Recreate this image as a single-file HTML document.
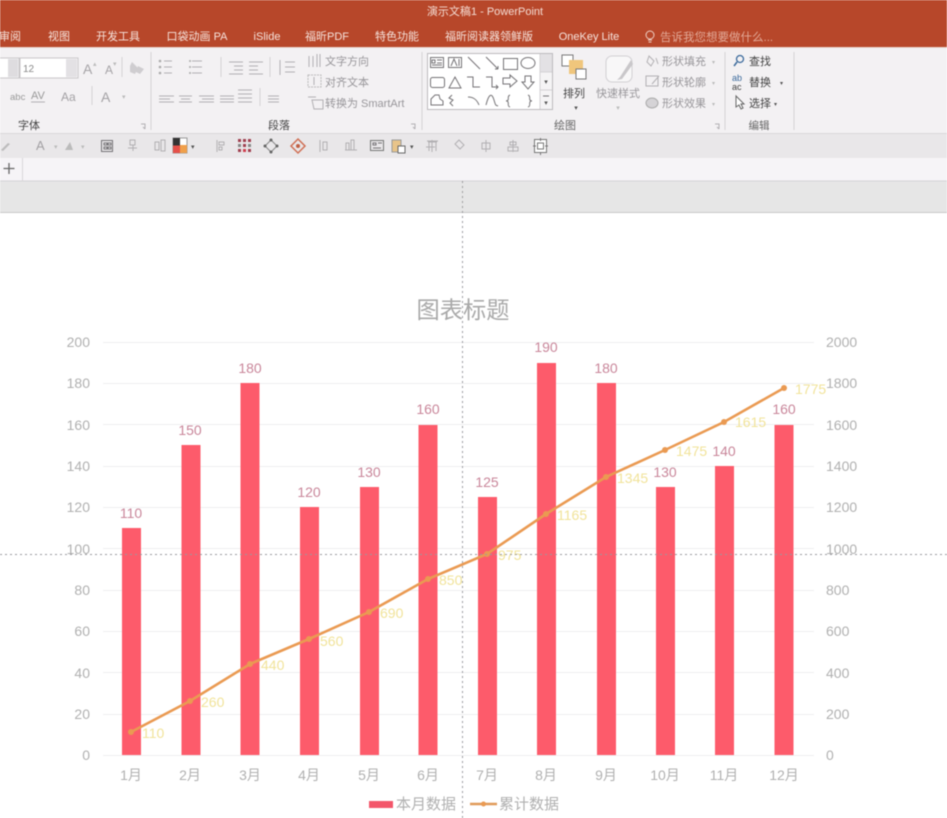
<!DOCTYPE html>
<html lang="zh">
<head>
<meta charset="utf-8">
<title>演示文稿1 - PowerPoint</title>
<style>
html,body{margin:0;padding:0;background:#fff;width:947px;height:818px;overflow:hidden}
svg{display:block;font-family:"Liberation Sans","Noto Sans CJK SC",sans-serif;filter:blur(.45px)}
.tab{fill:#f6e3dc;font-size:11px;text-anchor:middle}
.rb{fill:#98969a;font-size:11px}
.rd{fill:#444;font-size:11px}
.gl{fill:#666;font-size:10.5px;text-anchor:middle}
.ic{fill:none;stroke:#b2b0b3;stroke-width:1}
.dk{fill:none;stroke:#757376;stroke-width:1}
.ax{fill:#b0b0b0;font-size:14px}
.bl{fill:#c9869a;font-size:14px;text-anchor:middle}
.ll{fill:#f1e39a;font-size:14px}
.mo{fill:#b0b0b0;font-size:14px;text-anchor:middle}
.g{stroke:#eeeef0;stroke-width:1}
.b{fill:#fd5b6b}
.s{stroke:#d4d2d5;stroke-width:1}
</style>
</head>
<body>
<svg width="947" height="818" viewBox="0 0 947 818" xmlns="http://www.w3.org/2000/svg">
<!-- title bar -->
<rect width="947" height="47" fill="#b7472a"/>
<text x="485" y="15" fill="#f4dcd3" font-size="11" text-anchor="middle">演示文稿1 - PowerPoint</text>
<text class="tab" x="10" y="40">审阅</text>
<text class="tab" x="59" y="40">视图</text>
<text class="tab" x="118" y="40">开发工具</text>
<text class="tab" x="197" y="40">口袋动画 PA</text>
<text class="tab" x="267" y="40">iSlide</text>
<text class="tab" x="327" y="40">福昕PDF</text>
<text class="tab" x="397" y="40">特色功能</text>
<text class="tab" x="489" y="40">福昕阅读器领鲜版</text>
<text class="tab" x="589" y="40">OneKey Lite</text>
<circle cx="650" cy="35" r="4" fill="none" stroke="#eecfc4"/><path d="M648 40h4M648.500 42h3" stroke="#eecfc4"/>
<text x="660" y="41" fill="#e2a896" font-size="11.500">告诉我您想要做什么...</text>

<!-- ribbon -->
<rect y="47" width="947" height="86" fill="#f3f1f3"/>
<rect y="47" width="947" height="1" fill="#e9d6d0"/>
<path class="s" d="M151 52v78M422 52v78M725 52v78M794 52v78"/>

<!-- font group -->
<rect x="-2" y="58" width="21" height="20" fill="#fff" stroke="#c8c6c9"/>
<rect x="8" y="59" width="10" height="18" fill="#dedcdf"/>
<rect x="20" y="58" width="58" height="20" fill="#fff" stroke="#c8c6c9"/>
<rect x="66" y="59" width="11" height="18" fill="#e3e1e4"/>
<text x="23" y="72" font-size="10" fill="#888">12</text>
<text x="83" y="74" font-size="14" fill="#a5a3a6">A</text><text x="93" y="66" font-size="7" fill="#bbb">▴</text>
<text x="105" y="74" font-size="12" fill="#a5a3a6">A</text><text x="113" y="66" font-size="7" fill="#bbb">▾</text>
<path class="s" d="M122 57v20M92 86v19"/>
<path d="M132 62l6 6-3 6-5-2 0-6zM138 66l6 3-4 5-4-2z" fill="#cfcdd0"/>
<text x="10" y="100" font-size="9.500" fill="#999">abc</text>
<text x="31" y="99" font-size="11" fill="#999">AV</text><path class="ic" d="M31 102h14"/>
<text x="61" y="101" font-size="12" fill="#a3a1a4">Aa</text>
<text x="101" y="102" font-size="14" fill="#a3a1a4">A</text>
<text x="122" y="99" font-size="7" fill="#bbb">▾</text>
<text x="29" y="129" class="rd" text-anchor="middle">字体</text>
<path class="ic" d="M141 124h4v5M143 127l2 2"/>

<!-- paragraph group -->
<path class="ic" d="M164 61h8M164 67h8M164 73h8M192 61h10M192 67h10M192 73h10M159 96h15M159 99h11M159 102h15M179 96h13M181 99h9M179 102h13M199 96h15M202 99h12M199 102h15M220 96h14M220 99h14M220 102h14M238 90h14M238 94h14M238 98h14M238 102h14M268 96h11M268 99h11M268 102h11M229 62h14M234 66h9M234 70h9M229 74h14M249 62h14M249 66h9M249 70h9M249 74h14M285 62h10M285 67h10M285 72h10M280 60v15"/>
<path class="s" d="M221 57v20M270 57v20M260 88v18"/>
<circle cx="160" cy="61" r="1.300" fill="#aaa"/><circle cx="160" cy="67" r="1.300" fill="#aaa"/><circle cx="160" cy="73" r="1.300" fill="#aaa"/>
<circle cx="190" cy="61" r="1" fill="#aaa"/><circle cx="190" cy="67" r="1" fill="#aaa"/><circle cx="190" cy="73" r="1" fill="#aaa"/>
<path class="ic" d="M309 56v11M313 56v11M317 54v13M320 54v13"/>
<text x="325" y="65" class="rb">文字方向</text>
<rect x="308" y="75" width="13" height="12" fill="none" stroke="#bbb" stroke-dasharray="2 1"/>
<path class="ic" d="M314 77v8"/>
<text x="325" y="86" class="rb">对齐文本</text>
<path class="ic" d="M308 97h8M312 100h11v9h-9z"/>
<text x="325" y="107" class="rb">转换为 SmartArt</text>
<text x="279" y="129" class="rd" text-anchor="middle">段落</text>
<path class="ic" d="M411 124h4v5M413 127l2 2"/>

<!-- shapes gallery -->
<rect x="427.500" y="53.500" width="125" height="56" fill="#fff" stroke="#bdbbbe"/>
<rect x="540" y="54" width="12" height="55" fill="#f5f4f5"/>
<rect x="540" y="54" width="12" height="18" fill="#e3e1e4"/>
<path class="s" d="M540 54v55M540 72h12M540 90h12"/>
<text x="546" y="84" font-size="7" fill="#555" text-anchor="middle">▾</text>
<path class="dk" d="M543 96h6"/><text x="546" y="105" font-size="7" fill="#555" text-anchor="middle">▾</text>
<g class="dk">
<rect x="430.500" y="57.500" width="13" height="10"/><path d="M432 60h3v3h-3zM437 60h5M437 63h5M432 65h10"/>
<rect x="448.500" y="57.500" width="13" height="10"/><path d="M451 66l3-7 3 7M459 59v7"/>
<path d="M468 57l12 12M486 57l12 12M498 69v-3M498 69h-3"/>
<rect x="503.500" y="58.500" width="14" height="11"/>
<ellipse cx="528" cy="63" rx="7" ry="5.500"/>
<rect x="430.500" y="77.500" width="14" height="10" rx="2"/>
<path d="M449 88l6-11 6 11zM467 77h6v10h7M486 77h6v10h6M496 85l2 2-2 2M503 78h7v-3l7 6-7 6v-3h-7zM525 76h6v6h3l-6 7-6-7h3z"/>
<path d="M431 105v-6l4-4h4l1 4 3 2v4zM452 95l-3 3 4 2-3 3 3 3M468 97c6 0 9 3 11 8M486 105c3-12 6-12 8-5s2 5 4 6M510 95c-3 1-1 4-2 5 0 0-1 1-2 1 1 0 2 0 2 1 1 2-1 4 2 5M528 95c3 1 1 4 2 5 0 0 1 1 2 1-1 0-2 0-2 1-1 2 1 4-2 5"/>
</g>

<!-- arrange -->
<rect x="562" y="55" width="11" height="11" fill="#fff" stroke="#777"/>
<rect x="569" y="60" width="14" height="14" fill="#f0c67c"/>
<rect x="576" y="69" width="10" height="10" fill="#fff" stroke="#777"/>
<text x="574" y="97" class="rd" text-anchor="middle">排列</text>
<text x="576" y="110" font-size="7" fill="#555" text-anchor="middle">▾</text>
<!-- quick styles -->
<rect x="606" y="56" width="26" height="26" rx="6" fill="#f8f7f8" stroke="#d2d0d3"/>
<path d="M631 60l-11 17-3 3 5-1 11-15z" fill="#c9c7ca"/>
<text x="618" y="97" class="rb" text-anchor="middle">快速样式</text>
<text x="618" y="110" font-size="7" fill="#bbb" text-anchor="middle">▾</text>
<!-- shape fmt -->
<path class="ic" d="M649 56l5 5-3 5-4-4zM656 58l2 6"/>
<text x="662" y="65" class="rb">形状填充</text><text x="712" y="64" font-size="6" fill="#bbb">▾</text>
<path class="ic" d="M646 76h12v10h-12zM652 84l7-8"/>
<text x="662" y="86" class="rb">形状轮廓</text><text x="712" y="85" font-size="6" fill="#bbb">▾</text>
<ellipse cx="652" cy="103" rx="6" ry="5" fill="#d5d3d6" stroke="#aaa"/>
<text x="662" y="107" class="rb">形状效果</text><text x="712" y="106" font-size="6" fill="#bbb">▾</text>
<text x="565" y="129" class="rb" style="fill:#666" text-anchor="middle">绘图</text>
<path class="ic" d="M715 124h4v5M717 127l2 2"/>
<!-- editing -->
<circle cx="740" cy="59" r="3.500" fill="none" stroke="#3b6a9c" stroke-width="1.300"/><path d="M737 62l-3 4" stroke="#3b6a9c" stroke-width="1.500"/>
<text x="749" y="65" class="rd">查找</text>
<text x="732" y="81" font-size="9" fill="#3b6a9c">ab</text><text x="732" y="90" font-size="9" fill="#444">ac</text>
<text x="749" y="86" class="rd">替换</text><text x="780" y="85" font-size="6" fill="#555">▾</text>
<path d="M736 96v11l3-2 2 4 2-1-2-4h3z" fill="#fff" stroke="#666"/>
<text x="749" y="107" class="rd">选择</text><text x="774" y="106" font-size="6" fill="#555">▾</text>
<text x="759" y="129" class="gl">编辑</text>

<!-- quick toolbar -->
<rect y="133" width="947" height="25" fill="#e9e7e9"/>
<rect y="133" width="947" height="1" fill="#d9d7da"/>
<path d="M1 150l7-7 2 1-7 7z" fill="#bbb"/>
<text x="36" y="150" font-size="13" fill="#a3a1a4">A</text>
<text x="54" y="149" font-size="7" fill="#bbb">▾</text>
<path d="M65 150l5-8 3 8z" fill="#bbb"/><text x="81" y="149" font-size="7" fill="#bbb">▾</text>
<g class="dk">
<rect x="101.500" y="140.500" width="11" height="11"/><path d="M104 143h3v2h-3zM108 143h3v2h-3zM104 147h3v2h-3zM108 147h3v2h-3z"/>
</g>
<path class="ic" d="M130 140h5v5h-5zM128 148h9M133 145v6M155 142h4v8h-4zM161 140h4v11h-4zM217 140v12M219 142h5v3h-5zM219 147h3v3h-3zM320 140v12M323 142h4v8h-4zM345 150h12M346 143h3v7h-3zM351 140h3v10h-3zM432 140v12M428 142h9M426 147h9M486 140v12M482 143h8v6h-8zM513 140v12M510 142h6v3h-6zM508 147h10v4h-10zM459 140l5 5-4 4-5-5z"/>
<rect x="173" y="138" width="14" height="15" fill="#fff" stroke="#999"/>
<rect x="173" y="138" width="7" height="7.500" fill="#333"/>
<rect x="180" y="145" width="7" height="8" fill="#f0a04b"/>
<rect x="173" y="145.500" width="7" height="7.500" fill="#e5504a"/>
<text x="191" y="149" font-size="7" fill="#555">▾</text>
<g fill="#a04050"><rect x="238" y="139" width="3" height="3"/><rect x="243" y="139" width="3" height="3"/><rect x="248" y="139" width="3" height="3"/><rect x="238" y="144" width="3" height="3" fill="#888"/><rect x="243" y="144" width="3" height="3"/><rect x="248" y="144" width="3" height="3" fill="#888"/><rect x="238" y="149" width="3" height="3"/><rect x="243" y="149" width="3" height="3" fill="#d04050"/><rect x="248" y="149" width="3" height="3"/></g>
<path d="M271 140l6 6-6 6-6-6z" fill="none" stroke="#888"/><circle cx="271" cy="140" r="1.500" fill="#666"/><circle cx="271" cy="152" r="1.500" fill="#666"/><circle cx="265" cy="146" r="1.500" fill="#666"/><circle cx="277" cy="146" r="1.500" fill="#666"/>
<path d="M298 139l7 7-7 7-7-7z" fill="none" stroke="#d07055" stroke-width="1.500"/><circle cx="298" cy="146" r="2" fill="#c06045"/>
<rect x="370.500" y="140.500" width="13" height="10" fill="none" stroke="#777"/><path class="dk" d="M373 143h3v2h-3zM378 143h4M373 148h8"/>
<rect x="392" y="140" width="9" height="12" fill="#e8c48a" stroke="#999"/><rect x="398" y="146" width="7" height="7" fill="#fff" stroke="#666"/>
<text x="410" y="149" font-size="7" fill="#555">▾</text>
<path d="M427 141h11M429 141v10M436 141v10" class="ic"/>
<rect x="534.500" y="139.500" width="12" height="13" fill="#fff" stroke="#777"/><rect x="537.500" y="143" width="6" height="6" fill="none" stroke="#777"/>
<path class="dk" d="M540.500 138v3M540.500 152v3M533 146h3M545 146h3" />

<!-- tabs row -->
<rect y="158" width="947" height="23" fill="#f6f4f7"/>
<path d="M22.500 158v23" stroke="#d9d7da"/>
<path d="M9 163v11M3.500 168.500h11" stroke="#666" stroke-width="1.300"/>
<rect y="181" width="947" height="31" fill="#e6e6e6"/>
<path d="M0 181h947" stroke="#d5d3d6"/>
<rect y="212" width="947" height="1" fill="#c9c9c9"/>

<!-- chart grid -->
<g class="g">
<path d="M103 342.500h711M103 383.500h711M103 424.500h711M103 466.500h711M103 507.500h711M103 548.500h711M103 590.500h711M103 631.500h711M103 672.500h711M103 714.500h711M103 755.500h711"/>
</g>
<text x="463" y="318" text-anchor="middle" font-size="23.250" fill="#a9a9a9">图表标题</text>

<!-- bars -->
<rect class="b" x="122" y="528" width="19" height="227"/>
<rect class="b" x="181.500" y="445" width="19" height="310"/>
<rect class="b" x="240.500" y="383" width="19" height="372"/>
<rect class="b" x="300" y="507" width="19" height="248"/>
<rect class="b" x="360" y="487" width="19" height="268"/>
<rect class="b" x="418.500" y="425" width="19" height="330"/>
<rect class="b" x="478" y="497" width="19" height="258"/>
<rect class="b" x="537" y="363" width="19" height="392"/>
<rect class="b" x="597" y="383" width="19" height="372"/>
<rect class="b" x="656" y="487" width="19" height="268"/>
<rect class="b" x="715" y="466" width="19" height="289"/>
<rect class="b" x="774.500" y="425" width="19" height="330"/>

<!-- bar labels -->
<text class="bl" x="131" y="518">110</text>
<text class="bl" x="190" y="435">150</text>
<text class="bl" x="250" y="373">180</text>
<text class="bl" x="309" y="497">120</text>
<text class="bl" x="369" y="477">130</text>
<text class="bl" x="428" y="414">160</text>
<text class="bl" x="487" y="487">125</text>
<text class="bl" x="546" y="352">190</text>
<text class="bl" x="606" y="373">180</text>
<text class="bl" x="665" y="477">130</text>
<text class="bl" x="724" y="456">140</text>
<text class="bl" x="784" y="414">160</text>

<!-- line -->
<polyline points="131,732 190,701 250,664 309,639 369,612 428,579 487,554 546,514 606,477 665,450 724,422 784,388" fill="none" stroke="#ea9a52" stroke-width="2.600"/>
<g fill="#ea9a52">
<circle cx="131" cy="732" r="3"/><circle cx="190" cy="701" r="3"/><circle cx="250" cy="664" r="3"/><circle cx="309" cy="639" r="3"/><circle cx="369" cy="612" r="3"/><circle cx="428" cy="579" r="3"/><circle cx="487" cy="554" r="3"/><circle cx="546" cy="514" r="3"/><circle cx="606" cy="477" r="3"/><circle cx="665" cy="450" r="3"/><circle cx="724" cy="422" r="3"/><circle cx="784" cy="388" r="3"/>
</g>
<!-- line labels -->
<text class="ll" x="142" y="738">110</text>
<text class="ll" x="201" y="707">260</text>
<text class="ll" x="261" y="670">440</text>
<text class="ll" x="320" y="646">560</text>
<text class="ll" x="380" y="618">690</text>
<text class="ll" x="439" y="585">850</text>
<text class="ll" x="498" y="560">975</text>
<text class="ll" x="557" y="520">1165</text>
<text class="ll" x="617" y="483">1345</text>
<text class="ll" x="676" y="456">1475</text>
<text class="ll" x="735" y="427">1615</text>
<text class="ll" x="795" y="394">1775</text>

<!-- axes -->
<g class="ax" text-anchor="end">
<text x="90" y="347">200</text><text x="90" y="388">180</text><text x="90" y="430">160</text><text x="90" y="471">140</text><text x="90" y="512">120</text><text x="90" y="554">100</text><text x="90" y="595">80</text><text x="90" y="636">60</text><text x="90" y="678">40</text><text x="90" y="719">20</text><text x="90" y="760">0</text>
</g>
<g class="ax">
<text x="826" y="347">2000</text><text x="826" y="388">1800</text><text x="826" y="430">1600</text><text x="826" y="471">1400</text><text x="826" y="512">1200</text><text x="826" y="554">1000</text><text x="826" y="595">800</text><text x="826" y="636">600</text><text x="826" y="678">400</text><text x="826" y="719">200</text><text x="826" y="760">0</text>
</g>
<g>
<text class="mo" x="131" y="780">1月</text><text class="mo" x="190" y="780">2月</text><text class="mo" x="250" y="780">3月</text><text class="mo" x="309" y="780">4月</text><text class="mo" x="369" y="780">5月</text><text class="mo" x="428" y="780">6月</text><text class="mo" x="487" y="780">7月</text><text class="mo" x="546" y="780">8月</text><text class="mo" x="606" y="780">9月</text><text class="mo" x="665" y="780">10月</text><text class="mo" x="724" y="780">11月</text><text class="mo" x="784" y="780">12月</text>
</g>

<!-- legend -->
<rect x="369" y="801" width="24" height="7" fill="#f3566a"/>
<text x="396" y="809" font-size="15" fill="#b0b0b0">本月数据</text>
<path d="M470 804h27" stroke="#e09a5a" stroke-width="2.500"/><circle cx="483.500" cy="804" r="2.500" fill="#ea9a52"/>
<text x="499" y="809" font-size="15" fill="#b0b0b0">累计数据</text>

<!-- guides -->
<path d="M462.500 181V818" stroke="#9a9a9e" stroke-width="1" stroke-dasharray="2 3"/>
<path d="M0 554.500H947" stroke="#9a9a9e" stroke-width="1" stroke-dasharray="2 3"/>
</svg>
</body>
</html>
